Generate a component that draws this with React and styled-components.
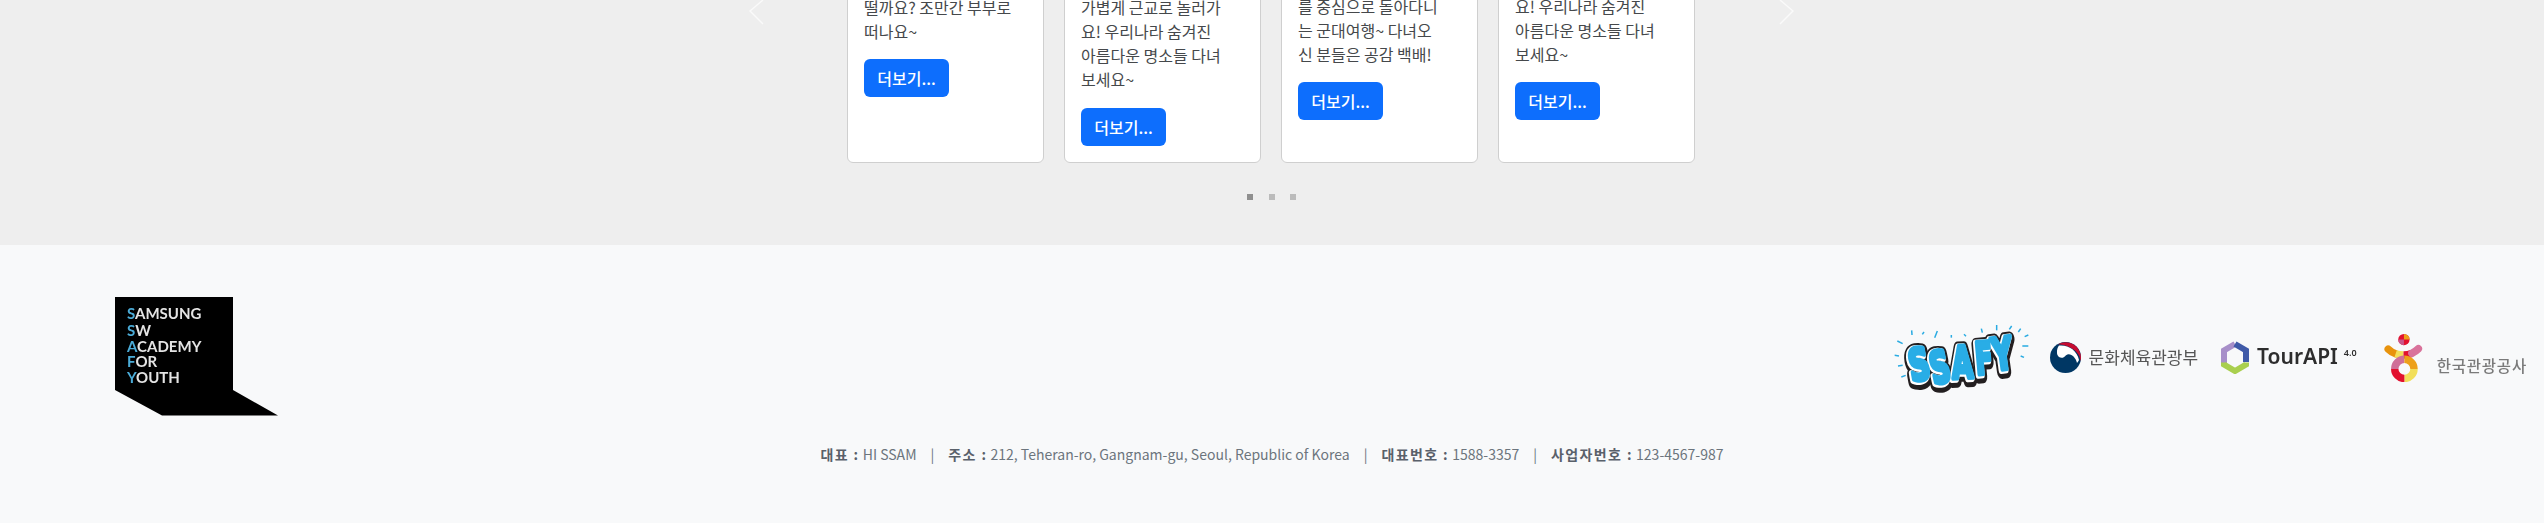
import React from "react";
import styled, { createGlobalStyle } from "styled-components";

const GlobalStyle = createGlobalStyle`
  * { box-sizing: border-box; }
  html, body { margin: 0; padding: 0; height: 523px; overflow: hidden; }
  body {
    font-family: "Noto Sans CJK KR", "Noto Sans", sans-serif;
    background: #f8f9fa;
    color: #212529;
  }
`;

const Page = styled.div`
  width: 2544px;
  height: 523px;
  display: flex;
  flex-direction: column;
`;

const CarouselSection = styled.section`
  position: relative;
  height: 245px;
  flex: none;
  background: #eeeeee;
  overflow: hidden;
  display: flex;
  flex-direction: column;
  justify-content: flex-end;
  align-items: center;
  padding: 0 2px 82px 0;
`;

const CardRow = styled.div`
  width: 848px;
  display: flex;
  justify-content: space-between;
  align-items: stretch;
  flex: none;
`;

const Card = styled.article`
  width: 197px;
  background: #fff;
  border: 1px solid #cfcfcf;
  border-radius: 6px;
  padding: 16px;
`;

const CardText = styled.p`
  margin: 0 0 ${(p) => p.$gap || 16}px;
  margin-top: ${(p) => p.$shift || 0}px;
  font-size: 16px;
  line-height: 24px;
  color: #45484b;
  white-space: nowrap;
`;

const MoreButton = styled.button`
  display: block;
  width: 85px;
  height: 38px;
  padding: 0;
  border: 0;
  border-radius: 6px;
  background: #0d6efd;
  color: #fff;
  font-family: inherit;
  font-size: 16px;
  font-weight: 500;
  line-height: 38px;
`;

const Dots = styled.div`
  position: absolute;
  left: 1247px;
  top: 194px;
  display: flex;
  gap: 15.5px;
`;

const Dot = styled.span`
  width: 6px;
  height: 6px;
  background: ${(p) => (p.$active ? "#8f8f8f" : "#bbbbbb")};
`;

const Chevron = styled.svg`
  position: absolute;
  top: -1px;
  left: ${(p) => p.$left}px;
  width: 16px;
  height: 26px;
  fill: none;
  stroke: #fafafa;
  stroke-width: 1.4;
`;

const Footer = styled.footer`
  flex: 1;
  background: #f8f9fa;
  padding-top: 52px;
  display: flex;
  flex-direction: column;
`;

const FooterTop = styled.div`
  display: flex;
  justify-content: space-between;
  align-items: center;
  padding: 0 17px 0 115px;
`;

const Partners = styled.div`
  display: flex;
  align-items: center;
`;

const Partner = styled.div`
  display: flex;
  align-items: center;
  margin-left: ${(p) => p.$ml || 0}px;
  filter: blur(0.35px);
`;

const PartnerName = styled.span`
  font-size: ${(p) => p.$size}px;
  color: ${(p) => p.$color};
  font-weight: ${(p) => p.$weight || 400};
  letter-spacing: ${(p) => p.$spacing || 0}px;
  margin-left: ${(p) => p.$ml || 0}px;
  margin-top: ${(p) => p.$mt || 0}px;
  white-space: nowrap;
  line-height: 1.2;
`;

const TourName = styled.span`
  font-family: "Noto Sans", sans-serif;
  font-size: 21px;
  font-weight: 600;
  color: #2d2d2d;
  margin-left: 7px;
  line-height: 1.2;
`;

const TourVersion = styled.sup`
  font-family: "Noto Sans", sans-serif;
  font-size: 9px;
  font-weight: 600;
  color: #2d2d2d;
  margin-left: 6px;
  position: relative;
  top: -5px;
`;

const InfoLine = styled.p`
  margin: 27px 0 0;
  text-align: center;
  font-size: 14px;
  line-height: 20px;
  color: #6c757d;
  white-space: nowrap;
`;

const InfoLabel = styled.b`
  font-weight: 700;
  letter-spacing: 1.4px;
  color: #59606a;
`;

const InfoSep = styled.span`
  margin: 0 14px;
`;

const LogoShape = styled.svg`
  display: block;
  flex: none;
  filter: ${(p) => (p.$soft ? "blur(0.35px)" : "none")};
`;

const AcademyLine = styled.text`
  font-family: Lato, "Noto Sans", sans-serif;
  font-size: 15px;
  font-weight: 700;
  fill: #e4e4e4;
`;

const AcademyInitial = styled.tspan`
  fill: #4bacd8;
`;

const SsafyLetter = styled.text`
  font-family: "DejaVu Sans", sans-serif;
  font-weight: 700;
  font-size: 44px;
  stroke-linejoin: round;
  paint-order: stroke;
`;

const ssafyRays = [
  [40, 75, 56, 83], [32, 118, 45, 120], [42, 150, 56, 148], [52, 183, 65, 178],
  [83, 43, 84, 57], [115, 55, 120, 48], [152, 65, 160, 45], [202, 65, 202, 57],
  [240, 55, 246, 61], [292, 38, 295, 50], [338, 27, 338, 43], [376, 40, 383, 30],
  [403, 48, 410, 38], [422, 62, 433, 57], [415, 90, 433, 90], [410, 120, 420, 124],
];

const ssafyLetters = [
  { ch: "S", x: 17, y: 60, r: -10, sx: 0.66 },
  { ch: "S", x: 39, y: 63, r: -12, sx: 0.62 },
  { ch: "A", x: 58, y: 57, r: -3, sx: 0.62 },
  { ch: "F", x: 82, y: 53, r: -5, sx: 0.58 },
  { ch: "Y", x: 100, y: 49, r: -8, sx: 0.64 },
];

function SsafyLogo() {
  const layer = (dx, dy, stroke, width, fill) =>
    ssafyLetters.map((l, i) => (
      <SsafyLetter
        key={i}
        transform={`translate(${l.x + dx} ${l.y + dy}) rotate(${l.r}) scale(${l.sx} 1)`}
        fill={fill}
        stroke={stroke}
        strokeWidth={width}
      >
        {l.ch}
      </SsafyLetter>
    ));

  return (
    <LogoShape $soft width="137" height="71" viewBox="0 0 137 71">
      {ssafyRays.map(([a, b, c, d], i) => (
        <line
          key={i}
          x1={a / 3 - 10}
          y1={b / 3 - 6}
          x2={c / 3 - 10}
          y2={d / 3 - 6}
          stroke="#29abe2"
          strokeWidth="1.5"
        />
      ))}
      {layer(0, 2, "#231f20", 14, "#231f20")}
      {layer(-0.500, 0.500, "#ffffff", 7, "#ffffff")}
      {layer(0.500, -0.500, "#29ade6", 4.500, "#29ade6")}
    </LogoShape>
  );
}

function AcademyLogo() {
  const lines = [
    ["S", "AMSUNG", 22],
    ["S", "W", 39],
    ["A", "CADEMY", 55],
    ["F", "OR", 70],
    ["Y", "OUTH", 86],
  ];
  return (
    <LogoShape $soft width="165" height="120" viewBox="0 0 165 120">
      <path d="M0 0H118V93L163 118.500H47L0 93Z" fill="#000" />
      {lines.map(([first, rest, y]) => (
        <AcademyLine key={y} x="12" y={y}>
          <AcademyInitial>{first}</AcademyInitial>
          {rest}
        </AcademyLine>
      ))}
    </LogoShape>
  );
}

function TaegeukMark() {
  return (
    <LogoShape width="31" height="31" viewBox="0 0 31 31">
      <circle cx="15.500" cy="15.500" r="15.500" fill="#003764" />
      <path d="M8 2.200A15.500 15.500 0 0 1 31 15.500C31 17 30.800 18 30.500 19C30 9 19 3 8 2.200Z" fill="#c60c30" />
      <path d="M9 3.500C18 2.500 27 8 29 18C28 20 27.500 20.500 27 21C26 16 22 12 18.500 12.200C15 12.400 15 16 11.500 15.800C8.500 15.600 7 13 7 11C6.800 8 7.500 5 9 3.500Z" fill="#fff" />
    </LogoShape>
  );
}

function HexMark() {
  return (
    <LogoShape width="30" height="33" viewBox="0 0 30 33">
      <path d="M15 3L4 9.500V23" fill="none" stroke="#a78fc9" strokeWidth="6" />
      <path d="M15 3L26 9.500V21" fill="none" stroke="#3f5aa8" strokeWidth="6" />
      <path d="M26 21.500V23.500L15 30L4 23.500V21.500" fill="none" stroke="#a9cf4e" strokeWidth="6" />
    </LogoShape>
  );
}

function TourismMark() {
  return (
    <LogoShape width="39" height="49" viewBox="0 0 44 56" fill="none">
      <circle cx="22.500" cy="7.500" r="6.500" fill="#e2112f" />
      <path d="M22.500 1A6.500 6.500 0 0 1 29 7.500H22.500Z" fill="#eda01a" />
      <path d="M22.500 14A6.500 6.500 0 0 1 16 7.500H22.500Z" fill="#c8578c" />
      <g strokeWidth="8.500" strokeLinecap="round">
        <path d="M4.500 18.500C7 21 10 22.800 13 23.800" stroke="#e8930c" />
        <path d="M13 23.800C16 24.800 19 25.200 22 25.200" stroke="#f2df5a" strokeLinecap="butt" />
        <path d="M22 25.200C26 25.200 29 24.400 31.500 23.300" stroke="#e2112f" strokeLinecap="butt" />
        <path d="M31.500 23.300C34 22 36.500 20.500 39 18" stroke="#d9729b" />
      </g>
      <g strokeWidth="8.500">
        <path d="M12 41A11 11 0 0 1 23 30" stroke="#cf6f98" />
        <path d="M23 30A11 11 0 0 1 34 41" stroke="#eda01a" />
        <path d="M34 41A11 11 0 0 1 23 52" stroke="#f2df5a" />
        <path d="M23 52A11 11 0 0 1 12 41" stroke="#e2112f" />
      </g>
    </LogoShape>
  );
}

export default function App() {
  return (
    <Page>
      <GlobalStyle />
      <CarouselSection>
        <CardRow>
          <Card>
            <CardText>
              떨까요? 조만간 부부로
              <br />
              떠나요~
            </CardText>
            <MoreButton>더보기...</MoreButton>
          </Card>
          <Card>
            <CardText $gap={17}>
              가볍게 근교로 놀러가
              <br />
              요! 우리나라 숨겨진
              <br />
              아름다운 명소들 다녀
              <br />
              보세요~
            </CardText>
            <MoreButton>더보기...</MoreButton>
          </Card>
          <Card>
            <CardText $shift={-1}>
              를 중심으로 돌아다니
              <br />
              는 군대여행~ 다녀오
              <br />
              신 분들은 공감 백배!
            </CardText>
            <MoreButton>더보기...</MoreButton>
          </Card>
          <Card>
            <CardText $shift={-1}>
              요! 우리나라 숨겨진
              <br />
              아름다운 명소들 다녀
              <br />
              보세요~
            </CardText>
            <MoreButton>더보기...</MoreButton>
          </Card>
        </CardRow>
        <Chevron $left={748} viewBox="0 0 16 26">
          <path d="M15 1L2 12L15 25" />
        </Chevron>
        <Chevron $left={1779} viewBox="0 0 16 26">
          <path d="M1 1L14 12L1 25" />
        </Chevron>
        <Dots>
          <Dot $active />
          <Dot />
          <Dot />
        </Dots>
      </CarouselSection>
      <Footer>
        <FooterTop>
          <AcademyLogo />
          <Partners>
            <SsafyLogo />
            <Partner $ml={19}>
              <TaegeukMark />
              <PartnerName $size={17} $color="#555555" $ml={8}>
                문화체육관광부
              </PartnerName>
            </Partner>
            <Partner $ml={22}>
              <HexMark />
              <TourName>TourAPI</TourName>
              <TourVersion>4.0</TourVersion>
            </Partner>
            <Partner $ml={27}>
              <TourismMark />
              <PartnerName $size={15.500} $color="#7a7a7a" $weight={500} $spacing={0.8} $ml={14} $mt={16}>
                한국관광공사
              </PartnerName>
            </Partner>
          </Partners>
        </FooterTop>
        <InfoLine>
          <InfoLabel>대표 :</InfoLabel> HI SSAM
          <InfoSep>|</InfoSep>
          <InfoLabel>주소 :</InfoLabel> 212, Teheran-ro, Gangnam-gu, Seoul, Republic of Korea
          <InfoSep>|</InfoSep>
          <InfoLabel>대표번호 :</InfoLabel> 1588-3357
          <InfoSep>|</InfoSep>
          <InfoLabel>사업자번호 :</InfoLabel> 123-4567-987
        </InfoLine>
      </Footer>
    </Page>
  );
}
